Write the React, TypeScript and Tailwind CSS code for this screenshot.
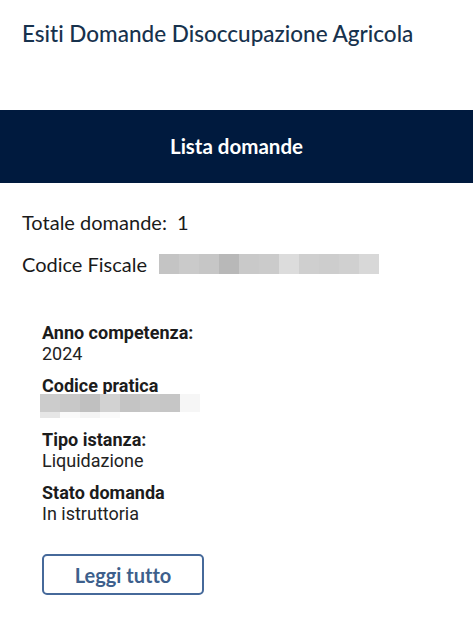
import React from "react";

const cfCells = ["#c4c4c4", "#cacaca", "#c6c6c6", "#b8b8b8", "#c9c9c9", "#cbcbcb", "#dcdcdc", "#cfcfcf", "#cdcdcd", "#d0d0d0", "#d8d8d8"];
const pratCells = ["#cccccc", "#c8c8c8", "#c0c0c0", "#d2d2d2", "#c4c4c4", "#c8c8c8", "#c6c6c6", "#f6f6f6"];
const pratCells2 = ["#e6e6e6", "#fafafa", "#f4f4f4", "#fafafa", "#ffffff", "#ffffff", "#ffffff", "#ffffff"];

function Blur({ cells, h }: { cells: string[]; h: string }) {
  return (
    <div className="flex">
      {cells.map((c, i) => (
        <div key={i} className={`w-5 ${h}`} style={{ backgroundColor: c }} />
      ))}
    </div>
  );
}

function Field({ label, value }: { label: string; value: React.ReactNode }) {
  return (
    <div className="flex flex-col">
      <span className="font-bold text-[18px] leading-[21px] text-[#1c1c1c]">{label}</span>
      <span className="text-[18px] leading-[21px] text-[#222]">{value}</span>
    </div>
  );
}

export default function App() {
  const head = { fontFamily: "Lato, 'Open Sans', sans-serif" };
  return (
    <div className="w-[473px] h-[618px] bg-white overflow-hidden [font-variant-ligatures:none]">
      <h1 className="pt-[19px] pl-[22px] text-[22.5px] leading-[30px] font-medium text-[#17324d]" style={head}>
        Esiti Domande Disoccupazione Agricola
      </h1>

      <div className="mt-[61px] h-[73px] bg-[#001a3e] flex items-center justify-center">
        <span className="text-white font-bold text-[20.5px]" style={head}>Lista domande</span>
      </div>

      <div className="px-[22px] pt-[26px]" style={head}>
        <div className="flex items-center gap-[10px] text-[20px] leading-[26px] text-[#1a1a1a]">
          <span>Totale domande:</span>
          <span>1</span>
        </div>
        <div className="mt-[16px] flex items-center gap-[12px] text-[20px] leading-[26px] text-[#1a1a1a]">
          <span>Codice Fiscale</span>
          <Blur cells={cfCells} h="h-5" />
        </div>
      </div>

      <div className="pl-[42px] pt-[45px] flex flex-col gap-[11px]" style={{ fontFamily: "Roboto, sans-serif" }}>
        <Field label="Anno competenza:" value="2024" />
        <div className="flex flex-col ml-[-2px]">
          <span className="font-bold text-[18px] leading-[21px] text-[#1c1c1c] pl-[2px]">Codice pratica</span>
          <div className="-mt-[2px]">
            <Blur cells={pratCells} h="h-[18px]" />
            <Blur cells={pratCells2} h="h-[6px]" />
          </div>
        </div>
        <Field label="Tipo istanza:" value="Liquidazione" />
        <Field label="Stato domanda" value="In istruttoria" />

        <button
          className="mt-[19px] w-[162px] h-[41px] border-2 border-[#46699a] rounded-[5px] text-[#3d5f8c] font-bold text-[20px]"
          style={head}
        >
          Leggi tutto
        </button>
      </div>
    </div>
  );
}
